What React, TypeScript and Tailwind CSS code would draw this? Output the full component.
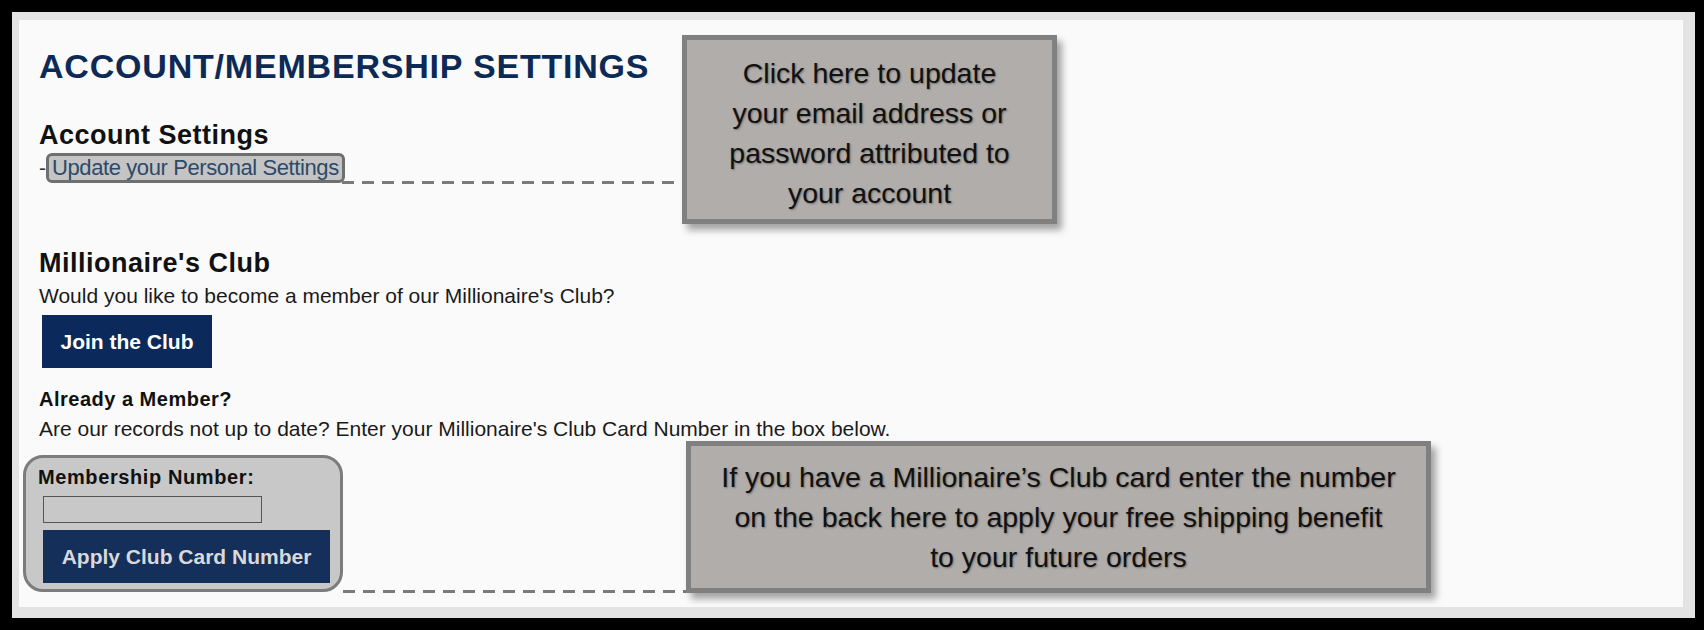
const CALLOUT_ONE = [
  "Click here to update",
  "your email address or",
  "password attributed to",
  "your account",
];

const CALLOUT_TWO = [
  "If you have a Millionaire\u2019s Club card enter the number",
  "on the back here to apply your free shipping benefit",
  "to your future orders",
];

function Dashes({ className }: { className: string }) {
  return (
    <div
      className={`absolute h-[3px] bg-[repeating-linear-gradient(90deg,#7a7a7a_0px,#7a7a7a_12px,transparent_12px,transparent_20px)] ${className}`}
      aria-hidden
    />
  );
}

export default function App() {
  return (
    <div className="h-[630px] w-full bg-black pt-[12px] pl-[12px] pr-[9px] pb-[12px]">
      <div className="h-full bg-[#e3e3e3] pl-[7px] pt-[8px] pr-[12px] pb-[11px]">
        <div className="relative h-full bg-[#fafafa] pl-[20px] pt-[27px] font-['Liberation_Sans',Arial,sans-serif] text-[#1a1a1a]">
          <h1 className="text-[34px] leading-[38px] font-bold tracking-[0.8px] text-[#0c2a55]">
            ACCOUNT/MEMBERSHIP SETTINGS
          </h1>

          <h2 className="mt-[35px] text-[27px] leading-[30px] font-bold tracking-[0.5px] text-[#111]">
            Account Settings
          </h2>
          <div className="mt-[3px] flex items-baseline">
            <span className="text-[21px] leading-none text-[#333]">-</span>
            <a className="inline-block rounded-[6px] border-[3px] border-[#6f6f6f] bg-[#c4c4c4] px-[3px] text-[22px] leading-[24px] tracking-[-0.4px] text-[#2d4a68]">
              Update your Personal Settings
            </a>
          </div>

          <h2 className="mt-[65px] text-[27px] leading-[30px] font-bold tracking-[0.5px] text-[#111]">
            Millionaire's Club
          </h2>
          <p className="mt-[5px] text-[21px] leading-[26px]">
            Would you like to become a member of our Millionaire's Club?
          </p>
          <button
            type="button"
            className="mt-[6px] ml-[3px] flex h-[53px] w-[170px] items-center justify-center bg-[#0b2a5b] text-[21px] font-bold text-white"
          >
            Join the Club
          </button>

          <h3 className="mt-[19px] text-[20px] leading-[24px] font-bold tracking-[0.5px] text-[#111]">
            Already a Member?
          </h3>
          <p className="mt-[5px] text-[21px] leading-[26px]">
            Are our records not up to date? Enter your Millionaire's Club Card Number in the box below.
          </p>

          <div className="mt-[13px] -ml-[16px] w-[320px] rounded-[20px] border-[3px] border-[#7c7c7c] bg-[#c8c8c8] pt-[8px] pl-[12px] pr-[10px] pb-[6px]">
            <div className="text-[20px] leading-[22px] font-bold tracking-[0.6px] text-[#111]">
              Membership Number:
            </div>
            <input
              type="text"
              className="mt-[8px] ml-[5px] block h-[27px] w-[219px] border border-[#555] bg-[#c8c8c8]"
            />
            <button
              type="button"
              className="mt-[7px] ml-[5px] flex h-[53px] w-[287px] items-center justify-center bg-[#14305a] text-[21px] font-bold text-[#d9d9d9]"
            >
              Apply Club Card Number
            </button>
          </div>

          <Dashes className="left-[323px] top-[161px] w-[340px]" />
          <Dashes className="left-[324px] top-[570px] w-[343px]" />

          <div className="absolute left-[663px] top-[15px] h-[189px] w-[375px] border-[5px] border-[#808080] bg-[#b0adab] pt-[13px] text-center text-[28.5px] leading-[40px] text-[#111] shadow-[5px_6px_7px_rgba(0,0,0,0.35)] [text-shadow:1px_1px_2px_rgba(0,0,0,0.35)]">
            {CALLOUT_ONE.map((line) => (
              <div key={line}>{line}</div>
            ))}
          </div>

          <div className="absolute left-[667px] top-[421px] flex h-[152px] w-[745px] flex-col items-center justify-center border-[5px] border-[#808080] bg-[#b0adab] text-center text-[28.5px] leading-[40px] text-[#111] shadow-[5px_6px_7px_rgba(0,0,0,0.35)] [text-shadow:1px_1px_2px_rgba(0,0,0,0.35)]">
            {CALLOUT_TWO.map((line) => (
              <div key={line}>{line}</div>
            ))}
          </div>
        </div>
      </div>
    </div>
  );
}
